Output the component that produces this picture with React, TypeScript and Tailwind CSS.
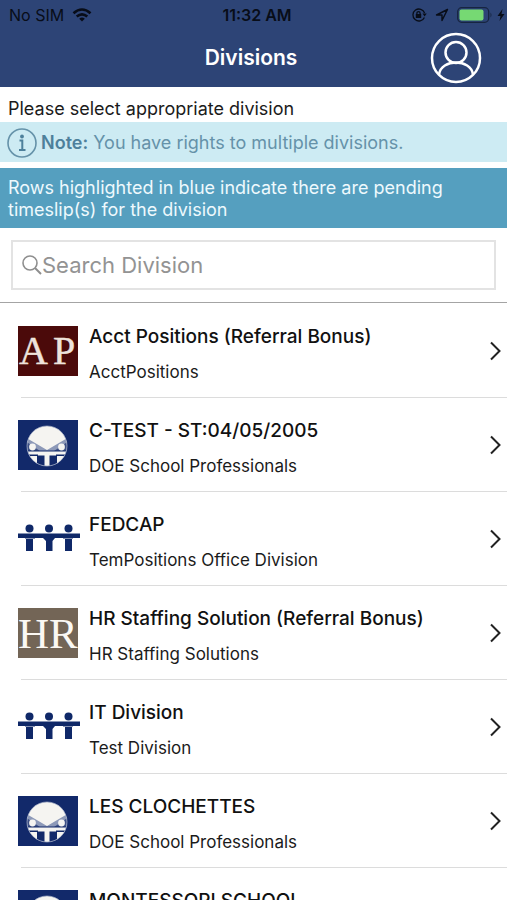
type LogoKind = "ap" | "doe" | "people" | "hr";

type Division = { name: string; group: string; logo: LogoKind };

const divisions: Division[] = [
  { name: "Acct Positions (Referral Bonus)", group: "AcctPositions", logo: "ap" },
  { name: "C-TEST - ST:04/05/2005", group: "DOE School Professionals", logo: "doe" },
  { name: "FEDCAP", group: "TemPositions Office Division", logo: "people" },
  { name: "HR Staffing Solution (Referral Bonus)", group: "HR Staffing Solutions", logo: "hr" },
  { name: "IT Division", group: "Test Division", logo: "people" },
  { name: "LES CLOCHETTES", group: "DOE School Professionals", logo: "doe" },
  { name: "MONTESSORI SCHOOL", group: "DOE School Professionals", logo: "doe" },
];

function Logo({ kind }: { kind: LogoKind }) {
  if (kind === "ap") {
    return (
      <svg viewBox="0 0 60 50" className="block h-[50px] w-[60px] bg-[#4b0a0a]" aria-hidden="true">
        <g fill="#eee3dc" stroke="#eee3dc" strokeWidth="0.400" fontSize="40" className="font-['Liberation_Serif',serif]">
          <text x="1" y="38">A</text>
          <text x="35" y="38">P</text>
        </g>
      </svg>
    );
  }
  if (kind === "hr") {
    return (
      <svg viewBox="0 0 60 50" className="block h-[50px] w-[60px] bg-[#736556]" aria-hidden="true">
        <g fill="#fbf8f3" fontSize="43" className="font-['Liberation_Serif',serif]">
          <text x="0" y="40">H</text>
          <text x="31" y="40">R</text>
        </g>
      </svg>
    );
  }
  if (kind === "doe") {
    return (
      <svg viewBox="0 0 60 50" className="block h-[50px] w-[60px] bg-[#12296a]" aria-hidden="true">
        <defs>
          <clipPath id="doe-disc">
            <circle cx="29" cy="26" r="20" />
          </clipPath>
        </defs>
        <circle cx="29" cy="26" r="20" fill="#f5f4f1" />
        <g clipPath="url(#doe-disc)">
          <path d="M7 17L29 30L51 17V31H7Z" fill="#8d99b8" />
          <path d="M7 21L22 31H7ZM51 21L36 31H51Z" fill="#3d5085" />
          <rect x="8" y="30.500" width="42" height="1" fill="#12296a" />
          <path d="M8 34.500H20V36H8ZM50 34.500H38V36H50Z" fill="#12296a" />
          <rect x="19" y="35.500" width="7.500" height="11" fill="#12296a" />
          <rect x="31.500" y="35.500" width="7.500" height="11" fill="#12296a" />
        </g>
        <circle cx="14.500" cy="27" r="3.400" fill="#f5f4f1" />
        <circle cx="43.500" cy="27" r="3.400" fill="#f5f4f1" />
        <circle cx="29" cy="26" r="20" fill="none" stroke="#aab3ca" strokeWidth="0.700" />
      </svg>
    );
  }
  return (
    <svg viewBox="0 0 62 50" className="-mr-0.5 block h-[50px] w-[62px]" aria-hidden="true">
      <g fill="#0f2868">
        <circle cx="11.500" cy="14.500" r="4" />
        <circle cx="31" cy="14.500" r="4" />
        <circle cx="50.500" cy="14.500" r="4" />
        <rect x="0" y="19.500" width="62" height="4.500" />
        <path d="M8 25H15V37H8ZM25 24H37L34.500 27V37H28V27ZM47 25H54V37H47Z" />
      </g>
      <path d="M7 24.500H17M45 24.500H55" stroke="#8793b3" />
    </svg>
  );
}

function StatusBar() {
  return (
    <div className="grid h-[30px] grid-cols-[1fr_auto_1fr] items-center pr-0.5 pl-[9px] text-base text-[#080d18]">
      <div className="flex items-center gap-2">
        <span>No SIM</span>
        <svg viewBox="0 0 20 14" className="h-[14px] w-5" fill="none" stroke="currentColor" strokeWidth="2.600" aria-label="Wi-Fi">
          <path d="M1.500 5.300Q10-2.300 18.500 5.300M4.700 8.600Q10 4 15.300 8.600" />
          <path d="M7.200 10.700Q10 8.400 12.800 10.700L10 13.500Z" fill="currentColor" stroke="none" />
        </svg>
      </div>
      <span className="font-semibold">11:32 AM</span>
      <div className="flex items-center justify-end gap-2">
        <svg viewBox="0 0 16 16" className="h-4 w-4" fill="none" stroke="currentColor" strokeWidth="1.300" aria-hidden="true">
          <path d="M13.400 10.500A6 6 0 1 1 13.600 6" />
          <path d="M11.500 6.500H15.700L13.600 9.500Z" fill="currentColor" stroke="none" />
          <rect x="4.800" y="7" width="5.400" height="4" fill="currentColor" stroke="none" />
          <path d="M5.900 7.500V6.200A1.600 1.600 0 0 1 9.100 6.200V7.500" />
        </svg>
        <svg viewBox="0 0 14 14" className="h-[14px] w-[14px]" fill="none" stroke="currentColor" strokeWidth="1.400" strokeLinejoin="round" aria-hidden="true">
          <path d="M12.500 1.500L1.500 7H7V12.500Z" />
        </svg>
        <div className="flex items-center gap-1">
          <svg viewBox="0 0 36 16" className="h-4 w-9" aria-label="Battery">
            <rect x="0.700" y="0.700" width="31" height="14.600" rx="4" fill="none" stroke="#172541" strokeWidth="1.300" />
            <rect x="2.500" y="2.500" width="24" height="11" rx="2" fill="#76d973" />
            <path d="M33.500 5.500Q35.500 8 33.500 10.500Z" fill="#172541" />
          </svg>
          <svg viewBox="0 0 8 12" className="h-3 w-2" fill="currentColor" aria-hidden="true">
            <path d="M5.500 0L0.500 7H3.500L2.500 12L7.500 5H4.500Z" />
          </svg>
        </div>
      </div>
    </div>
  );
}

export default function App() {
  return (
    <div className="flex h-screen flex-col overflow-hidden bg-white font-[Inter,sans-serif] text-[#1b1b1b]">
      <header className="shrink-0 bg-[#2d4476] pb-px">
        <StatusBar />
        <div className="grid h-14 grid-cols-[1fr_auto_1fr] items-center pr-[25px]">
          <h1 className="col-start-2 pl-[20px] text-[21px] font-semibold text-white">Divisions</h1>
          <button type="button" aria-label="Profile" className="justify-self-end text-white">
            <svg viewBox="0 0 52 52" className="block h-[52px] w-[52px]" fill="none" stroke="currentColor" strokeWidth="2.500">
              <circle cx="26" cy="26" r="24" />
              <circle cx="26" cy="20.500" r="10.500" />
              <path d="M9 42.500C11 26.500 41 26.500 43 42.500" />
            </svg>
          </button>
        </div>
      </header>

      <main className="flex min-h-0 flex-1 flex-col">
        <p className="shrink-0 px-2 pt-[9px] pb-px text-lg leading-[25px]">Please select appropriate division</p>
        <div className="flex h-10 shrink-0 items-center gap-1 bg-[#cdebf3] px-[7px] pt-0.5 text-lg text-[#6592a9]">
          <svg viewBox="0 0 30 30" className="h-[30px] w-[30px] shrink-0" fill="none" stroke="currentColor" aria-hidden="true">
            <circle cx="15" cy="15" r="14" strokeWidth="1.600" />
            <circle cx="15" cy="8.500" r="1.900" fill="#4d809b" stroke="none" />
            <path d="M12.500 12.500H15.300V21.500M12 22H18.500" stroke="#4d809b" strokeWidth="2" />
          </svg>
          <p><strong className="font-semibold text-[#4d809b]">Note:</strong> You have rights to multiple divisions.</p>
        </div>
        <p className="mt-[6px] shrink-0 bg-[#559fbf] px-2 pt-[9px] pb-[7px] text-lg leading-[22px] text-[#eef9fd]">
          Rows highlighted in blue indicate there are pending timeslip(s) for the division
        </p>
        <div className="shrink-0 border-b border-[#a4a4a4] px-[11px] py-3">
          <label className="flex h-[50px] items-center border-2 border-[#e3e3e3] pl-[9px] text-[#8e8e8e]">
            <svg viewBox="0 0 20 20" className="h-5 w-5 shrink-0" fill="none" stroke="currentColor" strokeWidth="1.600" aria-hidden="true">
              <circle cx="8" cy="8" r="7" />
              <path d="M13 13L19 19" strokeWidth="2" />
            </svg>
            <input
              type="search"
              aria-label="Search Division"
              placeholder="Search Division"
              className="min-w-0 flex-1 bg-transparent text-[22px] outline-none placeholder:text-[#939393]"
            />
          </label>
        </div>
        <ul className="min-h-0 flex-1 overflow-y-auto pt-px [scrollbar-width:none]">
          {divisions.map((d) => (
            <li key={d.name}>
              <button type="button" className="flex h-[93px] w-full items-center gap-[11px] pr-[6px] pl-[18px] text-left">
                <Logo kind={d.logo} />
                <span className="flex min-w-0 flex-1 flex-col gap-[11px] pt-2">
                  <span className="text-[19px] leading-6 font-medium text-[#111111]">{d.name}</span>
                  <span className="text-[17px] leading-6">{d.group}</span>
                </span>
                <svg viewBox="0 0 12 20" className="h-5 w-3" fill="none" stroke="#222222" strokeWidth="2" aria-hidden="true">
                  <path d="M2 1.500L10.500 10L2 18.500" />
                </svg>
              </button>
              <div className="ml-[21px] h-px bg-[#dcdcdc]" />
            </li>
          ))}
        </ul>
      </main>
    </div>
  );
}
